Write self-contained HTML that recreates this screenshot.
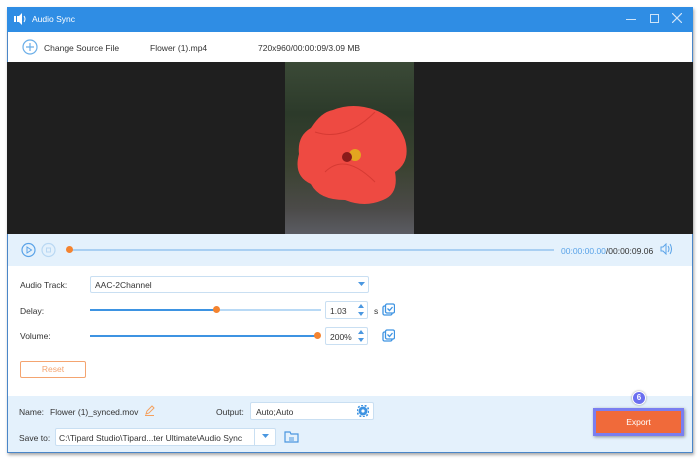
<!DOCTYPE html>
<html><head><meta charset="utf-8"><style>
*{margin:0;padding:0;box-sizing:border-box}
body{width:700px;height:462px;background:#fff;font-family:"Liberation Sans",sans-serif;font-size:8.5px;color:#333;position:relative;overflow:hidden}
.a{position:absolute}
.win{left:7px;top:7px;width:686px;height:446px;border:1px solid #4a86c8;box-shadow:1px 2px 3px rgba(0,0,0,.35);background:#fff}
.t{white-space:nowrap}
.inp{background:#fff;border:1px solid #c9dff2;border-radius:2px}
</style></head><body>
<div class="a win"></div>
<div class="a" style="left:7px;top:7px;width:686px;height:25px;background:#2f8de4"></div>
<svg class="a" style="left:14px;top:13px" width="14" height="12" viewBox="0 0 14 12"><rect x="0" y="3" width="2" height="6" fill="#fff"/><path d="M3 3h2l3-3v12l-3-3H3z" fill="#fff"/><path d="M10 3q2 3 0 6" stroke="#fff" fill="none"/></svg>
<div class="a t" style="left:32px;top:14px;color:#fff;font-size:8.5px">Audio Sync</div>
<div class="a" style="left:626px;top:19px;width:10px;height:1px;background:#cfe4f8"></div>
<div class="a" style="left:650px;top:14px;width:9px;height:9px;border:1px solid #cfe4f8"></div>
<svg class="a" style="left:672px;top:13px" width="10" height="10"><path d="M0 0L10 10M10 0L0 10" stroke="#cfe4f8" stroke-width="1.2"/></svg>
<svg class="a" style="left:22px;top:39px" width="16" height="16"><circle cx="8" cy="8" r="7" fill="none" stroke="#6aaee8" stroke-width="1.2"/><path d="M8 4v8M4 8h8" stroke="#6aaee8" stroke-width="1.2"/></svg>
<div class="a t" style="left:44px;top:43px">Change Source File</div>
<div class="a t" style="left:150px;top:43px">Flower (1).mp4</div>
<div class="a t" style="left:258px;top:43px">720x960/00:00:09/3.09 MB</div>
<div class="a" style="left:7px;top:62px;width:686px;height:172px;background:#1f1f1f"></div>
<div class="a" style="left:285px;top:62px;width:129px;height:172px;background:linear-gradient(180deg,#3b4a37 0%,#2c3a2a 30%,#3a4230 60%,#4b4a48 85%,#5b5c63 100%)"></div>
<svg class="a" style="left:285px;top:62px" width="129" height="172"><path d="M48 48q20-8 42 0q22 8 30 30q6 22-10 32q4 22-12 28q-18 8-38 0q-26 0-34-16q-18-8-12-30q-2-18 12-26q10-16 22-18z" fill="#ee4a42"/><path d="M30 70q30 10 60-20M40 110q20-20 50 10" stroke="#d63a33" fill="none"/><circle cx="70" cy="93" r="6" fill="#e3a520"/><circle cx="62" cy="95" r="5" fill="#8a1a1a"/></svg>
<div class="a" style="left:8px;top:234px;width:684px;height:32px;background:#e4f1fc"></div>
<svg class="a" style="left:21px;top:242px" width="36" height="16"><circle cx="7.5" cy="8" r="6.5" fill="none" stroke="#5aa3e8" stroke-width="1.2"/><path d="M6 5v6l4.5-3z" fill="none" stroke="#5aa3e8"/><circle cx="27.5" cy="8" r="6.5" fill="none" stroke="#b9d8f3" stroke-width="1.2"/><rect x="25.5" y="6" width="4" height="4" fill="none" stroke="#b9d8f3"/></svg>
<div class="a" style="left:70px;top:249px;width:484px;height:2px;background:#a9cff2"></div>
<div class="a" style="left:66px;top:246px;width:7px;height:7px;border-radius:50%;background:#f4832f"></div>
<div class="a t" style="left:561px;top:246px;color:#5aa3e8">00:00:00.00<span style="color:#333">/00:00:09.06</span></div>
<svg class="a" style="left:660px;top:243px" width="12" height="12"><path d="M1 4h2l3-3v10l-3-3H1z" fill="none" stroke="#5aa3e8"/><path d="M8 3q2 3 0 6M10 1q3 5 0 10" stroke="#5aa3e8" fill="none"/></svg>
<div class="a t" style="left:20px;top:280px">Audio Track:</div>
<div class="a inp" style="left:90px;top:276px;width:279px;height:17px"></div>
<div class="a t" style="left:95px;top:280px">AAC-2Channel</div>
<svg class="a" style="left:358px;top:282px" width="7" height="5"><path d="M0 0h7L3.5 4z" fill="#4a97e0"/></svg>
<div class="a t" style="left:20px;top:306px">Delay:</div>
<div class="a" style="left:90px;top:309px;width:127px;height:2px;background:#3d93e2"></div>
<div class="a" style="left:217px;top:309px;width:104px;height:2px;background:#b8d9f5"></div>
<div class="a" style="left:213px;top:306px;width:7px;height:7px;border-radius:50%;background:#f4832f"></div>
<div class="a inp" style="left:325px;top:301px;width:43px;height:18px"></div>
<div class="a t" style="left:330px;top:306px">1.03</div>
<svg class="a" style="left:358px;top:303px" width="6" height="14"><path d="M0 5L3 1 6 5zM0 9l3 4 3-4z" fill="#4a97e0"/></svg>
<div class="a t" style="left:374px;top:306px">s</div>
<svg class="a" style="left:382px;top:303px" width="13" height="13"><rect x="1" y="3" width="9" height="9" rx="1.5" fill="none" stroke="#3d93e2" stroke-width="1.3"/><rect x="3.5" y="1" width="9" height="9" rx="1.5" fill="#fff" stroke="#3d93e2" stroke-width="1.3"/><path d="M5.5 5.5l2 2 3-3.5" stroke="#3d93e2" fill="none" stroke-width="1.3"/></svg>
<div class="a t" style="left:20px;top:331px">Volume:</div>
<div class="a" style="left:90px;top:335px;width:228px;height:2px;background:#3d93e2"></div>
<div class="a" style="left:314px;top:332px;width:7px;height:7px;border-radius:50%;background:#f4832f"></div>
<div class="a inp" style="left:325px;top:327px;width:43px;height:18px"></div>
<div class="a t" style="left:330px;top:332px">200%</div>
<svg class="a" style="left:358px;top:329px" width="6" height="14"><path d="M0 5L3 1 6 5zM0 9l3 4 3-4z" fill="#4a97e0"/></svg>
<svg class="a" style="left:382px;top:329px" width="13" height="13"><rect x="1" y="3" width="9" height="9" rx="1.5" fill="none" stroke="#3d93e2" stroke-width="1.3"/><rect x="3.5" y="1" width="9" height="9" rx="1.5" fill="#fff" stroke="#3d93e2" stroke-width="1.3"/><path d="M5.5 5.5l2 2 3-3.5" stroke="#3d93e2" fill="none" stroke-width="1.3"/></svg>
<div class="a" style="left:20px;top:361px;width:66px;height:17px;border:1px solid #f4a470;border-radius:2px;color:#f4a470;text-align:center;line-height:15px">Reset</div>
<div class="a" style="left:8px;top:396px;width:684px;height:56px;background:#e4f1fc"></div>
<div class="a t" style="left:19px;top:407px">Name:</div>
<div class="a t" style="left:50px;top:407px">Flower (1)_synced.mov</div>
<svg class="a" style="left:144px;top:405px" width="11" height="11"><path d="M2 9l1-3 5-5 2 2-5 5z" fill="none" stroke="#f4a05e"/><path d="M1 10.5h9" stroke="#f4a05e"/></svg>
<div class="a t" style="left:216px;top:407px">Output:</div>
<div class="a inp" style="left:250px;top:402px;width:124px;height:18px"></div>
<div class="a t" style="left:256px;top:407px">Auto;Auto</div>
<svg class="a" style="left:357px;top:405px" width="12" height="12"><circle cx="6" cy="6" r="4.5" fill="#3d93e2"/><circle cx="6" cy="6" r="5.8" fill="none" stroke="#3d93e2" stroke-width="1.6" stroke-dasharray="2 1.6"/><circle cx="6" cy="6" r="1.6" fill="#fff"/></svg>
<div class="a t" style="left:19px;top:433px">Save to:</div>
<div class="a inp" style="left:55px;top:428px;width:221px;height:18px"></div>
<div class="a" style="left:254px;top:429px;width:1px;height:16px;background:#c9dff2"></div>
<div class="a t" style="left:59px;top:433px">C:\Tipard Studio\Tipard...ter Ultimate\Audio Sync</div>
<svg class="a" style="left:262px;top:434px" width="7" height="5"><path d="M0 0h7L3.5 4z" fill="#4a97e0"/></svg>
<svg class="a" style="left:284px;top:430px" width="15" height="13"><path d="M1 2h5l1 2h7v8H1z" fill="none" stroke="#4a97e0" stroke-width="1.2"/><path d="M5 8h5M5 10h5" stroke="#4a97e0"/></svg>
<div class="a" style="left:632px;top:391px;width:14px;height:14px;border-radius:50%;background:#6b6ff0;border:1.5px solid #fff;box-shadow:0 0 2px rgba(0,0,0,.4);color:#fff;font-size:8px;text-align:center;line-height:11px;font-weight:bold">6</div>
<div class="a" style="left:593px;top:408px;width:91px;height:28px;background:#f06a3a;border:3px solid #7a7ef0;box-shadow:1px 1px 3px rgba(0,0,0,.4);color:#fff;text-align:center;line-height:22px">Export</div>
</body></html>
